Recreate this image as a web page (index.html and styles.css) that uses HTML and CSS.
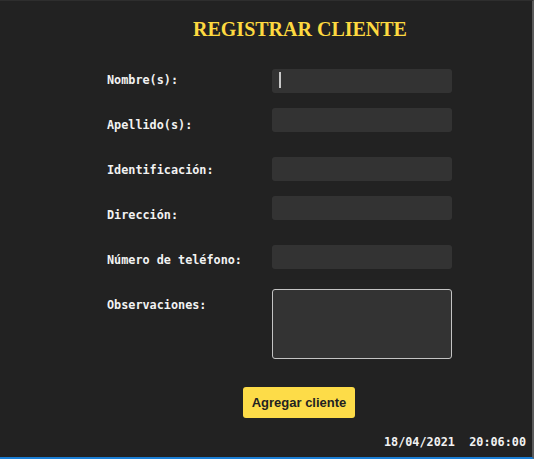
FILE: index.html
```html
<!DOCTYPE html>
<html lang="es">
<head>
<meta charset="utf-8">
<title>Registrar cliente</title>
<link rel="stylesheet" href="styles.css">
</head>
<body>
<div class="window">
  <main class="content">
    <h1 class="title">REGISTRAR CLIENTE</h1>
    <form class="form">
      <div class="row r1">
        <label class="label" for="nombre">Nombre(s):</label>
        <span class="field-wrap caret"><input class="field" id="nombre" type="text"></span>
      </div>
      <div class="row r2">
        <label class="label" for="apellido">Apellido(s):</label>
        <span class="field-wrap"><input class="field" id="apellido" type="text"></span>
      </div>
      <div class="row r3">
        <label class="label" for="ident">Identificación:</label>
        <span class="field-wrap"><input class="field" id="ident" type="text"></span>
      </div>
      <div class="row r4">
        <label class="label" for="dir">Dirección:</label>
        <span class="field-wrap"><input class="field" id="dir" type="text"></span>
      </div>
      <div class="row r5">
        <label class="label" for="tel">Número de teléfono:</label>
        <span class="field-wrap"><input class="field" id="tel" type="text"></span>
      </div>
      <div class="row r6">
        <label class="label" for="obs">Observaciones:</label>
        <span class="field-wrap"><textarea class="area" id="obs"></textarea></span>
      </div>
      <div class="actions">
        <button class="btn" type="button">Agregar cliente</button>
      </div>
    </form>
  </main>
  <footer class="status">18/04/2021&nbsp;&nbsp;20:06:00</footer>
</div>
</body>
</html>
```
FILE: styles.css
```css
html, body {
  margin: 0;
  padding: 0;
  background: #222222;
}
.window {
  box-sizing: border-box;
  width: 534px;
  height: 459px;
  background: #222222;
  border-top: 1px solid #2e2e2e;
  border-right: 2px solid #5a5a5a;
  border-bottom: 2px solid #1b7fd6;
  display: flex;
  flex-direction: column;
}
.content {
  padding-left: 107px;
  width: 386px;
}
.title {
  margin: 17px 0 0 0;
  font-family: "Liberation Serif", "Times New Roman", serif;
  font-weight: bold;
  font-size: 20px;
  line-height: 23px;
  color: #fdd940;
  text-align: center;
}
.form {
  margin-top: 17px;
  display: flex;
  flex-direction: column;
}
.row {
  display: grid;
  grid-template-columns: 165px 180px;
  height: 45px;
  align-items: start;
}
.label {
  font-family: "DejaVu Sans Mono", "Liberation Mono", monospace;
  font-weight: bold;
  font-size: 11.8px;
  line-height: 45px;
  color: #f2f2f2;
}
.field-wrap {
  position: relative;
  display: block;
}
.field {
  box-sizing: border-box;
  display: block;
  width: 180px;
  height: 24px;
  border: none;
  border-radius: 3px;
  background: #333333;
  outline: none;
  padding: 0 6px;
}
.caret::after {
  content: "";
  position: absolute;
  left: 7px;
  top: 3px;
  width: 2px;
  height: 16px;
  background: #c8c8c8;
}
.r1 .field-wrap { margin-top: 11px; }
.r2 .field-wrap { margin-top: 5px; }
.r3 .field-wrap { margin-top: 9px; }
.r4 .field-wrap { margin-top: 3px; }
.r5 .field-wrap { margin-top: 7px; }
.r6 { height: 76px; }
.r6 .field-wrap { margin-top: 6px; }
.area {
  box-sizing: border-box;
  display: block;
  width: 180px;
  height: 70px;
  border: 1px solid #c4c4c4;
  border-radius: 3px;
  background: #333333;
  outline: none;
  resize: none;
  margin: 0;
}
.actions {
  display: flex;
  justify-content: center;
  margin-top: 28px;
  padding-right: 2px;
}
.btn {
  box-sizing: border-box;
  height: 31px;
  width: 112px;
  padding: 0;
  border: none;
  border-radius: 3px;
  background: #fddc48;
  color: #222222;
  font-family: "Liberation Sans", Arial, sans-serif;
  font-weight: bold;
  font-size: 13px;
}
.status {
  margin-top: 17px;
  padding-right: 6px;
  text-align: right;
  font-family: "DejaVu Sans Mono", "Liberation Mono", monospace;
  font-weight: bold;
  font-size: 11.8px;
  line-height: 14px;
  color: #f2f2f2;
}
```
